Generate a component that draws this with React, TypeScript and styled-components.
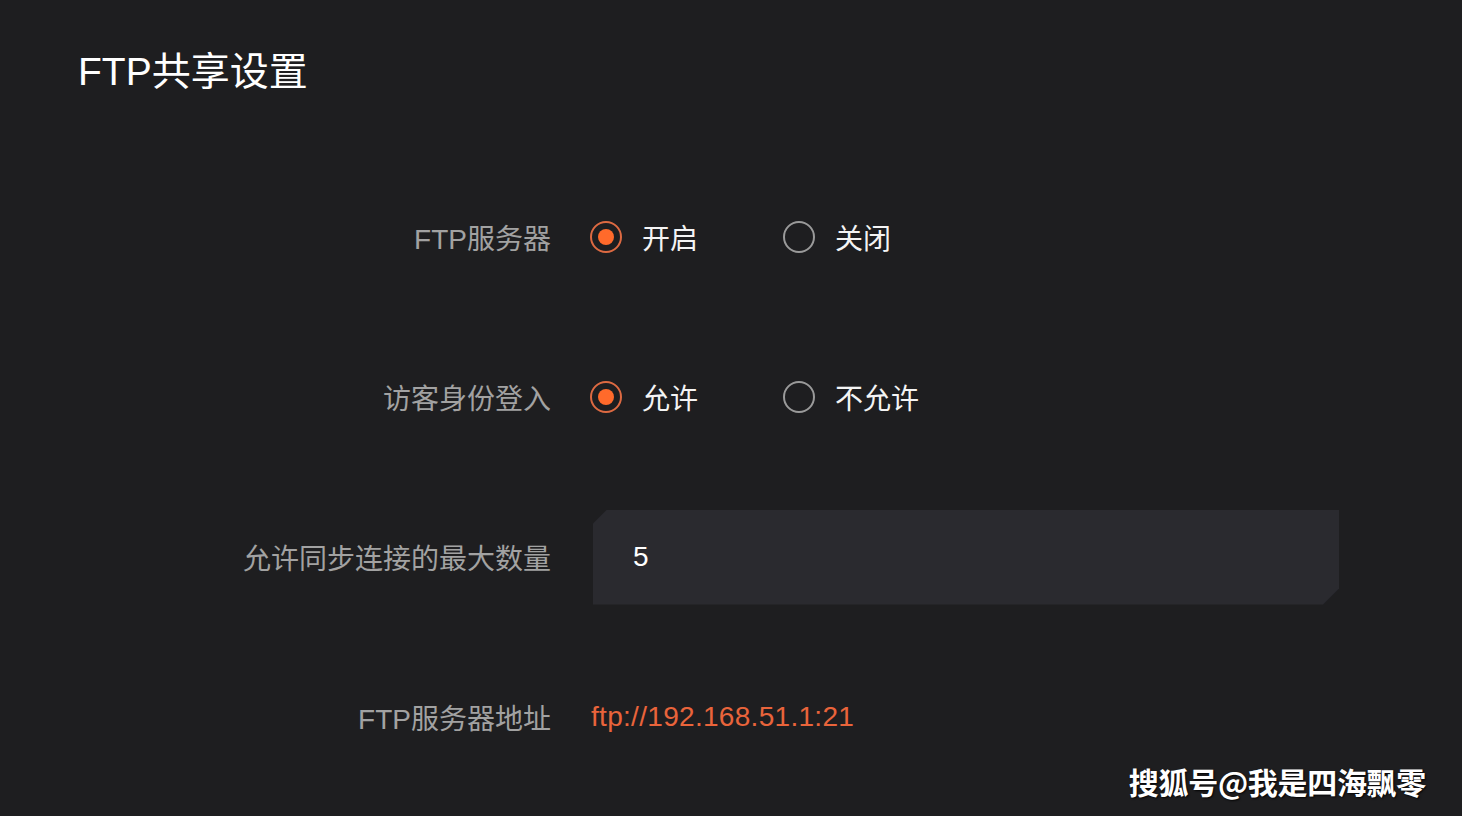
import React from "react";
import styled, { createGlobalStyle } from "styled-components";

const Global = createGlobalStyle`
  html, body { margin: 0; padding: 0; background: #1e1e20; }
  body {
    font-family: "Liberation Sans", "Noto Sans CJK SC", sans-serif;
    -webkit-font-smoothing: antialiased;
  }
`;

const Page = styled.div`
  position: relative;
  width: 1462px;
  height: 816px;
  background: #1e1e20;
  overflow: hidden;
  box-sizing: border-box;
  padding-top: 50px;
`;

const Title = styled.h1`
  margin: 0 0 0 78px;
  font-size: 39px;
  line-height: 44px;
  font-weight: 400;
  color: #ffffff;
  letter-spacing: 0;
`;

const Form = styled.div`
  margin-top: 63px;
  display: grid;
  grid-template-columns: 551px 1fr;
  column-gap: 40px;
  grid-auto-rows: 160px;
`;

const Label = styled.div`
  display: flex;
  align-items: center;
  justify-content: flex-end;
  font-size: 28px;
  color: #a2a2a2;
  white-space: nowrap;
`;

const Control = styled.div`
  display: flex;
  align-items: center;
`;

const Option = styled.label`
  display: flex;
  align-items: center;
  gap: 20px;
  margin-right: 86px;
  font-size: 28px;
  color: #f4f4f4;
  cursor: pointer;
`;

const Radio = styled.span<{ $checked?: boolean }>`
  width: 32px;
  height: 32px;
  box-sizing: border-box;
  border-radius: 50%;
  border: 2px solid ${(p) => (p.$checked ? "#dd6a42" : "#9a9a9a")};
  display: flex;
  align-items: center;
  justify-content: center;
  margin-left: -1px;

  &::after {
    content: "";
    display: ${(p) => (p.$checked ? "block" : "none")};
    width: 16px;
    height: 16px;
    border-radius: 50%;
    background: #ff6a2b;
  }
`;

const InputBox = styled.div`
  margin-left: 2px;
  width: 746px;
  height: 95px;
  box-sizing: border-box;
  padding-left: 40px;
  display: flex;
  align-items: center;
  background: #2a2a2f;
  color: #ffffff;
  font-size: 28px;
  clip-path: polygon(14px 0, 100% 0, 100% calc(100% - 16px), calc(100% - 16px) 100%, 0 100%, 0 14px);
`;

const Address = styled.span`
  font-size: 28px;
  color: #e9643b;
  letter-spacing: 0.3px;
`;

const Watermark = styled.div`
  position: absolute;
  right: 36px;
  bottom: 13px;
  font-size: 30px;
  font-weight: 700;
  color: #ffffff;
  font-family: "Noto Sans CJK SC", sans-serif;
  text-shadow: 1px 1px 2px rgba(0, 0, 0, 0.9);
  letter-spacing: -0.3px;
`;

type Opt = { text: string; checked?: boolean };

const RadioGroup: React.FC<{ options: Opt[] }> = ({ options }) => (
  <Control>
    {options.map((o) => (
      <Option key={o.text}>
        <Radio $checked={o.checked} />
        {o.text}
      </Option>
    ))}
  </Control>
);

export default function App() {
  return (
    <>
      <Global />
      <Page>
        <Title>FTP共享设置</Title>
        <Form>
          <Label>FTP服务器</Label>
          <RadioGroup options={[{ text: "开启", checked: true }, { text: "关闭" }]} />

          <Label>访客身份登入</Label>
          <RadioGroup options={[{ text: "允许", checked: true }, { text: "不允许" }]} />

          <Label>允许同步连接的最大数量</Label>
          <Control>
            <InputBox>5</InputBox>
          </Control>

          <Label>FTP服务器地址</Label>
          <Control>
            <Address>ftp://192.168.51.1:21</Address>
          </Control>
        </Form>
        <Watermark>搜狐号@我是四海飘零</Watermark>
      </Page>
    </>
  );
}
